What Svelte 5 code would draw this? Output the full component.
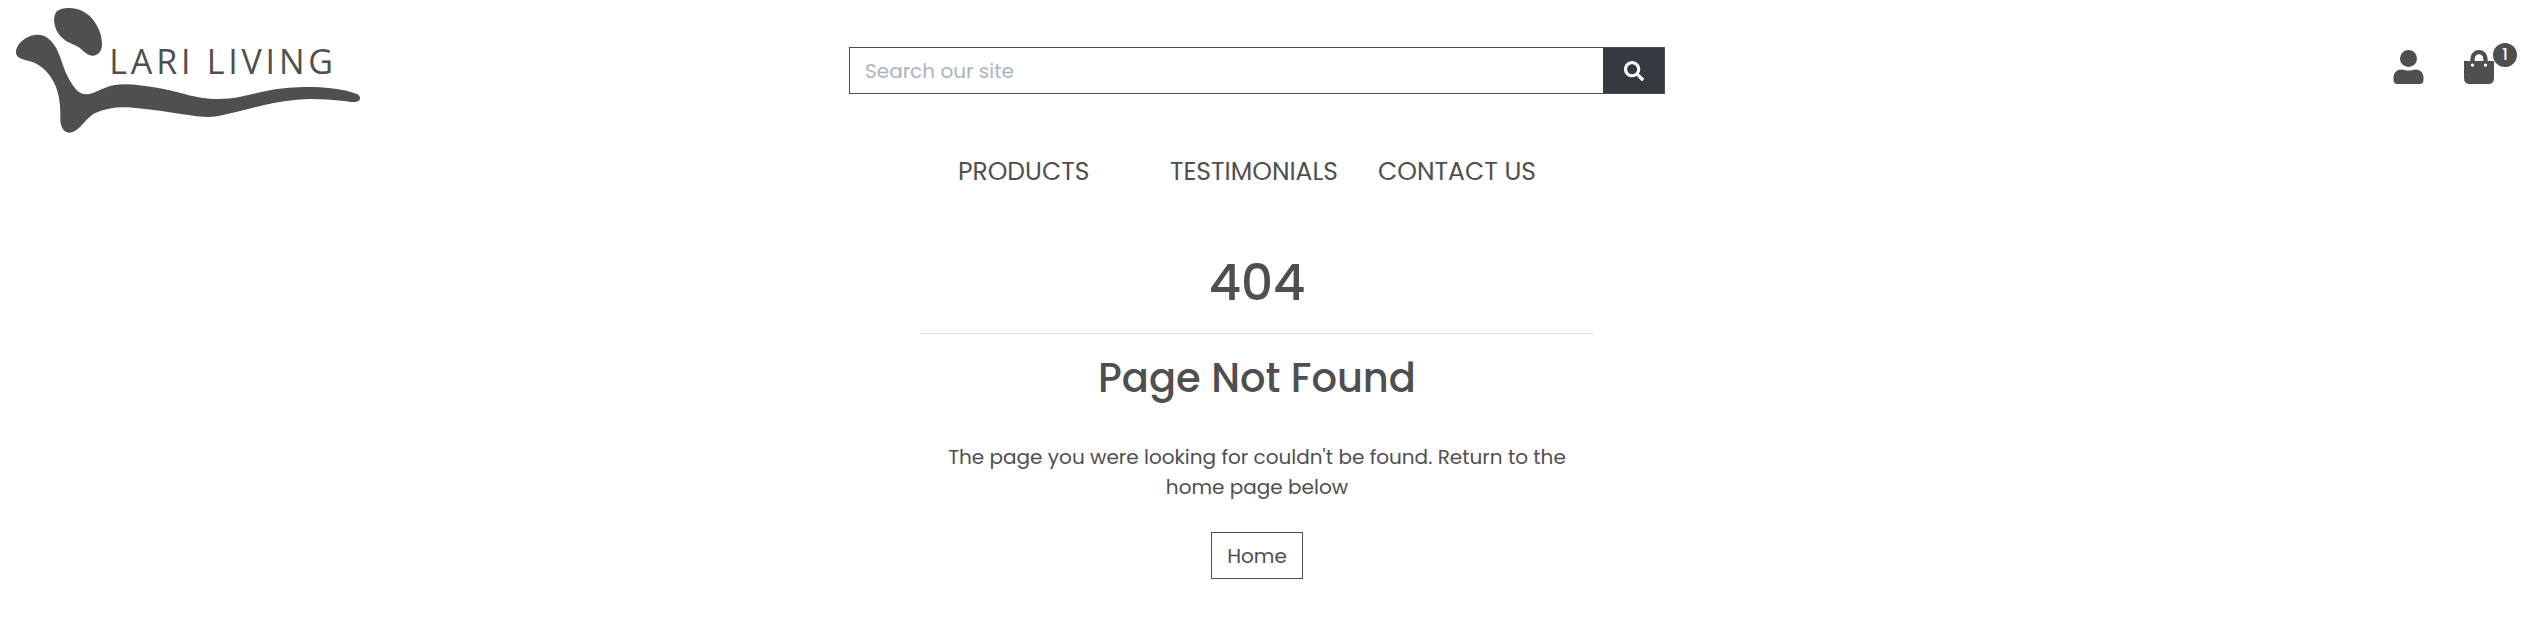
<script>
  const links = [
    { label: 'PRODUCTS', kind: 'products' },
    { label: 'TESTIMONIALS', kind: 'testimonials' },
    { label: 'CONTACT US', kind: 'contact' }
  ];
  let cartCount = 1;
</script>

<div class="page">
  <header>
    <a class="logo" href="#home" aria-label="Lari Living">
      <svg viewBox="0 0 1140 420" width="380" height="140">
        <path d="M202 24C230 22 257 34 275 54C293 75 306 103 306 132C306 153 294 168 277 167C257 166 249 149 231 139C211 129 192 124 177 103C164 87 157 56 167 39C173 29 188 25 202 24Z" />
        <path d="M48 157C48 130 82 104 113 104C139 104 156 122 169 145C187 181 191 213 211 244C224 266 236 283 259 283C287 282 303 262 345 255C382 249 431 257 471 263C526 271 575 292 628 296C705 302 751 281 814 270C864 261 940 258 992 265C1024 269 1053 274 1072 283C1081 288 1083 298 1075 303C1066 309 1049 305 1032 303C988 299 935 295 891 299C810 306 741 329 666 346C634 354 604 351 571 346C513 337 457 328 400 323C357 319 319 323 286 339C254 355 240 395 209 398C191 399 181 380 181 358C182 321 179 279 160 244C149 224 132 203 106 190C84 179 48 181 48 157Z" />
        <text x="328" y="221" textLength="671" lengthAdjust="spacing">LARI LIVING</text>
      </svg>
    </a>

    <form class="search">
      <input type="text" placeholder="Search our site" aria-label="Search" />
      <button type="button" aria-label="Submit">
        <svg viewBox="0 0 512 512" width="20" height="20">
          <path d="M505 442.700 405.300 343c-4.500-4.500-10.600-7-17-7H372c27.600-35.300 44-79.700 44-128C416 93.100 322.900 0 208 0S0 93.100 0 208s93.100 208 208 208c48.300 0 92.700-16.400 128-44v16.300c0 6.400 2.500 12.500 7 17l99.700 99.700c9.400 9.400 24.600 9.400 33.900 0l28.300-28.300c9.400-9.400 9.400-24.600.1-34zM208 336c-70.700 0-128-57.200-128-128 0-70.700 57.200-128 128-128 70.700 0 128 57.200 128 128 0 70.700-57.200 128-128 128z" />
        </svg>
      </button>
    </form>

    <div class="actions">
      <a href="#account" aria-label="Account">
        <svg viewBox="0 0 31 34" width="31" height="34">
          <circle cx="15.500" cy="8.500" r="8.500" />
          <path d="M.5 30V27.500C.5 22.500 4 19.500 8.500 19.500C11 19.500 12.500 20.600 15.500 20.600S20 19.500 22.500 19.500C27 19.500 30.500 22.500 30.500 27.500V30C30.500 32.500 29 34 26.700 34H4.300C2 34 .5 32.500 .5 30Z" />
        </svg>
      </a>
      <a class="bag" href="#cart" aria-label="Cart">
        <svg viewBox="0 0 30 34" width="30" height="34">
          <path fill-rule="evenodd" d="M0 11H6.400V8.500A8.600 8.500 0 0 1 23.600 8.500V11H30V28Q30 34 24 34H6Q0 34 0 28ZM10.700 11H19.300V8.500A4.300 4.300 0 0 0 10.700 8.500ZM8.500 13.400a1.700 1.700 0 1 0 0 3.400a1.700 1.700 0 1 0 0-3.400ZM21.500 13.400a1.700 1.700 0 1 0 0 3.400a1.700 1.700 0 1 0 0-3.400Z" />
        </svg>
        <span class="count">{cartCount}</span>
      </a>
    </div>
  </header>

  <nav>
    {#each links as link}
      <a href="#{link.kind}">{link.label}</a>
    {/each}
  </nav>

  <main>
    <h1>404</h1>
    <hr />
    <h2>Page Not Found</h2>
    <p>The page you were looking for couldn't be found. Return to the home page below</p>
    <a class="home" href="#home">Home</a>
  </main>
</div>

<style>
  :global(body) {
    margin: 0;
    background: #fff;
  }
  .page {
    width: 2514px;
    height: 636px;
    color: #4f4f4f;
    font-family: Poppins, Inter, sans-serif;
    font-size: 20px;
    line-height: 30px;
  }
  a {
    color: inherit;
    text-decoration: none;
  }
  svg {
    display: block;
    fill: #4f4f4f;
  }
  header {
    display: grid;
    grid-template-columns: 849px 816px 1fr;
    align-items: start;
    height: 140px;
  }
  .logo text {
    font: 400 102px "Open Sans", sans-serif;
  }
  .search {
    display: flex;
    height: 47px;
    margin-top: 47px;
  }
  input {
    box-sizing: border-box;
    flex: 1;
    min-width: 0;
    height: 47px;
    padding: 0 0 0 15px;
    border: 1px solid #4f4f4f;
    border-right: 0;
    border-radius: 0;
    background: #fff;
    font: inherit;
  }
  input::placeholder {
    color: #aab4bf;
    opacity: 1;
  }
  button {
    display: flex;
    align-items: center;
    justify-content: center;
    width: 62px;
    height: 47px;
    padding: 0;
    border: 1px solid #4f4f4f;
    border-left: 0;
    background: #343a40;
  }
  button svg {
    fill: #fff;
  }
  .actions {
    display: flex;
    justify-content: flex-end;
    gap: 40px;
    padding: 50px 20.500px 0 0;
  }
  .bag {
    position: relative;
  }
  .count {
    position: absolute;
    top: -7px;
    left: 29.500px;
    width: 24px;
    height: 24px;
    border-radius: 50%;
    background: #4f4f4f;
    color: #fff;
    font-size: 16px;
    font-weight: 500;
    line-height: 24px;
    text-align: center;
  }
  nav {
    display: grid;
    grid-template-columns: 212px 208px auto;
    padding: 13px 0 0 958px;
    font-size: 25px;
    line-height: 38px;
  }
  main {
    display: flex;
    flex-direction: column;
    align-items: center;
    width: 674px;
    margin: 62px auto 0;
    text-align: center;
  }
  h1 {
    margin: 0;
    font-size: 50px;
    font-weight: 500;
    line-height: 60px;
  }
  hr {
    width: 100%;
    height: 1px;
    margin: 20px 0;
    border: 0;
    background: #e0e0e0;
  }
  h2 {
    margin: 0;
    font-size: 40px;
    font-weight: 500;
    line-height: 48px;
  }
  p {
    margin: 40px 0 30px;
    padding: 0 20px;
  }
  .home {
    box-sizing: border-box;
    padding: 1px 15px 0;
    height: 47px;
    border: 1px solid #4f4f4f;
    line-height: 45px;
  }
</style>
